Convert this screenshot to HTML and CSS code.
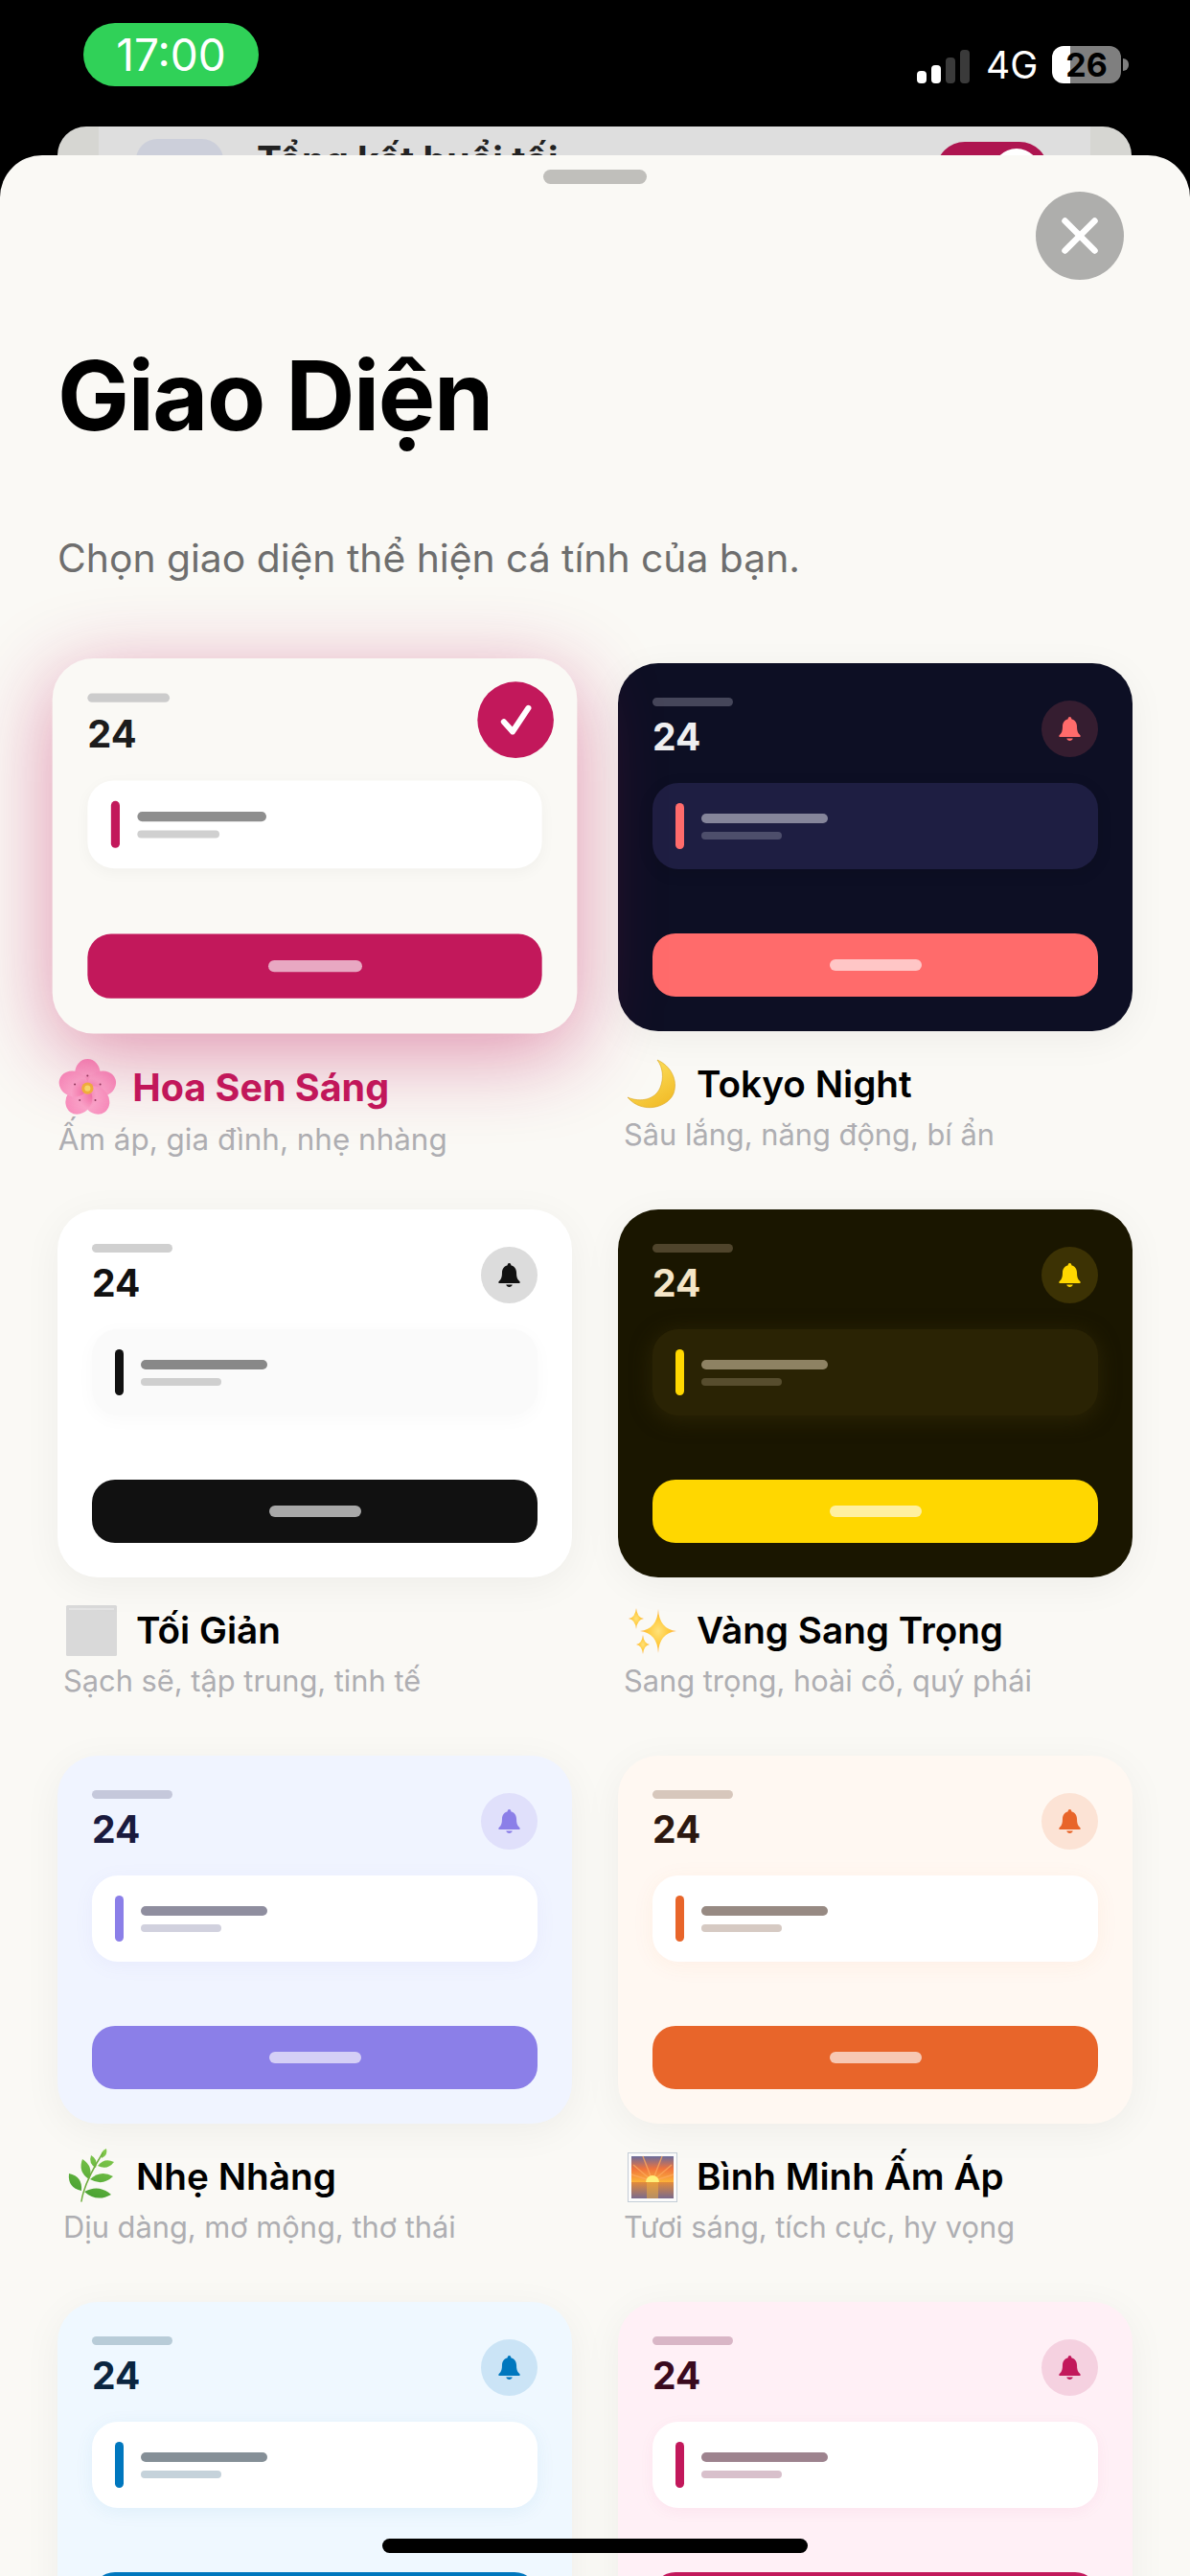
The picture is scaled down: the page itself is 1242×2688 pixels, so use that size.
FILE: index.html
```html
<!DOCTYPE html>
<html lang="vi">
<head>
<meta charset="utf-8">
<title>Giao Diện</title>
<link rel="stylesheet" href="styles.css">
</head>
<body>
<svg class="sprite" width="0" height="0" aria-hidden="true">
  <symbol id="bell" viewBox="3 2 18 20">
    <path d="M12 2c-.8 0-1.4.6-1.4 1.3v.5C7.8 4.5 6 6.9 6 9.8c0 3.5-.7 5.3-1.6 6.4-.6.7-1.4 1.1-1.4 1.8 0 .5.4.8 1 .8h16c.6 0 1-.3 1-.8 0-.7-.8-1.1-1.4-1.8-.9-1.1-1.6-2.9-1.6-6.4 0-2.9-1.8-5.3-4.6-6v-.5C13.4 2.6 12.8 2 12 2zM9.4 20c.2 1.2 1.4 2 2.6 2s2.4-.8 2.6-2H9.4z"/>
  </symbol>
</svg>
<div class="phone">
  <header class="status">
    <div class="time">17:00</div>
    <div class="status-right">
      <div class="signal">
        <i class="bar b1"></i><i class="bar b2"></i><i class="bar b3"></i><i class="bar b4"></i>
      </div>
      <span class="net">4G</span>
      <div class="battery"><span class="batt-text">26</span></div>
      <i class="batt-nub"></i>
    </div>
  </header>

  <div class="peek">
    <div class="peek-inner">
      <div class="peek-tile"></div>
      <div class="peek-title">Tổng kết buổi tối</div>
      <div class="peek-toggle"><i class="peek-knob"></i></div>
    </div>
  </div>

  <main class="sheet">
    <div class="grabber"></div>
    <div class="close-row">
      <button class="close" aria-label="Đóng">
        <svg width="38" height="38" viewBox="0 0 38 38"><path d="M3.5 3.5l31 31M34.5 3.5l-31 31" fill="none" stroke="#fff" stroke-width="6.5" stroke-linecap="round"/></svg>
      </button>
    </div>
    <h1 class="title">Giao Diện</h1>
    <p class="subtitle">Chọn giao diện thể hiện cá tính của bạn.</p>

    <div class="grid">

      <article class="item selected t-lotus">
        <div class="card">
          <div class="head"><div class="head-left"><i class="line"></i><b class="num">24</b></div><span class="bell-wrap"><svg class="bell"><use href="#bell"/></svg></span></div>
          <div class="list"><i class="accent"></i><div class="texts"><i class="l1"></i><i class="l2"></i></div></div>
          <div class="btn"><i class="pill"></i></div>
          <span class="check"><svg width="78" height="78" viewBox="0 0 78 78"><path d="M27 41l9 10 16-24" fill="none" stroke="#fff" stroke-width="6" stroke-linecap="round" stroke-linejoin="round"/></svg></span>
        </div>
        <div class="name-row">
          <svg class="emoji" viewBox="0 0 60 60">
            <defs><radialGradient id="petal" gradientUnits="userSpaceOnUse" cx="30" cy="31" r="29"><stop offset="0" stop-color="#F472A8"/><stop offset=".5" stop-color="#FBA6CB"/><stop offset="1" stop-color="#F98FBE"/></radialGradient></defs>
            <g fill="url(#petal)">
              <ellipse cx="30" cy="16" rx="13" ry="15"/>
              <ellipse cx="44.3" cy="26.4" rx="15" ry="13" transform="rotate(-18 44.3 26.4)"/>
              <ellipse cx="38.8" cy="43.1" rx="13" ry="15" transform="rotate(-36 38.8 43.1)"/>
              <ellipse cx="21.2" cy="43.1" rx="13" ry="15" transform="rotate(36 21.2 43.1)"/>
              <ellipse cx="15.7" cy="26.4" rx="15" ry="13" transform="rotate(18 15.7 26.4)"/>
            </g>
            <g fill="#8E3B5E"><circle cx="30" cy="18" r="1"/><circle cx="43" cy="27" r="1"/><circle cx="38" cy="43" r="1"/><circle cx="22" cy="43" r="1"/><circle cx="17" cy="27" r="1"/></g>
            <circle cx="30" cy="31" r="6" fill="#F3B73A"/><circle cx="30" cy="31" r="3" fill="#FBE16A"/>
          </svg>
          <h2 class="name">Hoa Sen Sáng</h2>
        </div>
        <p class="desc">Ấm áp, gia đình, nhẹ nhàng</p>
      </article>

      <article class="item t-tokyo">
        <div class="card">
          <div class="head"><div class="head-left"><i class="line"></i><b class="num">24</b></div><span class="bell-wrap"><svg class="bell"><use href="#bell"/></svg></span></div>
          <div class="list"><i class="accent"></i><div class="texts"><i class="l1"></i><i class="l2"></i></div></div>
          <div class="btn"><i class="pill"></i></div>
        </div>
        <div class="name-row">
          <svg class="emoji" viewBox="0 0 60 60">
            <defs><linearGradient id="moon" x1="0" y1="0" x2=".6" y2="1"><stop offset="0" stop-color="#FFE766"/><stop offset="1" stop-color="#F2BE2C"/></linearGradient></defs>
            <path d="M35 5C49 11 57 26 52 40 46 55 19 62 4 44 18 50 33 46 38 34 42 24 41 13 35 5Z" fill="url(#moon)" stroke="#D9A520" stroke-width=".6"/>
          </svg>
          <h2 class="name">Tokyo Night</h2>
        </div>
        <p class="desc">Sâu lắng, năng động, bí ẩn</p>
      </article>

      <article class="item t-minimal">
        <div class="card">
          <div class="head"><div class="head-left"><i class="line"></i><b class="num">24</b></div><span class="bell-wrap"><svg class="bell"><use href="#bell"/></svg></span></div>
          <div class="list"><i class="accent"></i><div class="texts"><i class="l1"></i><i class="l2"></i></div></div>
          <div class="btn"><i class="pill"></i></div>
        </div>
        <div class="name-row">
          <svg class="emoji" viewBox="0 0 60 60">
            <rect x="3" y="4" width="53" height="53" rx="1.5" fill="#D9D9D9"/>
            <rect x="6" y="7" width="47" height="2" fill="#E4E4E4"/>
          </svg>
          <h2 class="name">Tối Giản</h2>
        </div>
        <p class="desc">Sạch sẽ, tập trung, tinh tế</p>
      </article>

      <article class="item t-gold">
        <div class="card">
          <div class="head"><div class="head-left"><i class="line"></i><b class="num">24</b></div><span class="bell-wrap"><svg class="bell"><use href="#bell"/></svg></span></div>
          <div class="list"><i class="accent"></i><div class="texts"><i class="l1"></i><i class="l2"></i></div></div>
          <div class="btn"><i class="pill"></i></div>
        </div>
        <div class="name-row">
          <svg class="emoji" viewBox="0 0 60 60">
            <defs><radialGradient id="spark"><stop offset="0" stop-color="#FFE27A"/><stop offset=".6" stop-color="#FFC93C"/><stop offset="1" stop-color="#FFAA44"/></radialGradient></defs>
            <g fill="url(#spark)">
              <path d="M36 8Q37 29 55 31 37 33 36 54 35 33 17 31 35 29 36 8Z"/>
              <path d="M13 7Q14 17 21 18 14 19 13 29 12 19 5 18 12 17 13 7Z"/>
              <path d="M20 35Q21 44 27 45 21 46 20 55 19 46 13 45 19 44 20 35Z"/>
            </g>
          </svg>
          <h2 class="name">Vàng Sang Trọng</h2>
        </div>
        <p class="desc">Sang trọng, hoài cổ, quý phái</p>
      </article>

      <article class="item t-soft">
        <div class="card">
          <div class="head"><div class="head-left"><i class="line"></i><b class="num">24</b></div><span class="bell-wrap"><svg class="bell"><use href="#bell"/></svg></span></div>
          <div class="list"><i class="accent"></i><div class="texts"><i class="l1"></i><i class="l2"></i></div></div>
          <div class="btn"><i class="pill"></i></div>
        </div>
        <div class="name-row">
          <svg class="emoji" viewBox="0 0 60 60">
            <defs><linearGradient id="herb" gradientUnits="userSpaceOnUse" x1="40" y1="0" x2="20" y2="58"><stop offset="0" stop-color="#86CC4E"/><stop offset="1" stop-color="#3F9A2E"/></linearGradient></defs>
            <g fill="url(#herb)">
              <path d="M19 45Q20.600 30.100 6 27 4.400 41.900 19 45Z"/>
              <path d="M22 46Q35 57.500 50 49 37 37.500 22 46Z"/>
              <path d="M27 33Q32 19.600 20 12 15 25.400 27 33Z"/>
              <path d="M28 33Q41 40.500 52 30 39 22.500 28 33Z"/>
              <path d="M34 21Q37 12.300 29 8 26 16.700 34 21Z"/>
              <path d="M36 19Q46 24 53 15 43 10 36 19Z"/>
              <path d="M40 11Q47 8 45 1 38 4 40 11Z"/>
            </g>
            <path d="M19 56C21 42 29 25 41 6" fill="none" stroke="#6FAE3E" stroke-width="1.5" stroke-linecap="round"/>
          </svg>
          <h2 class="name">Nhẹ Nhàng</h2>
        </div>
        <p class="desc">Dịu dàng, mơ mộng, thơ thái</p>
      </article>

      <article class="item t-dawn">
        <div class="card">
          <div class="head"><div class="head-left"><i class="line"></i><b class="num">24</b></div><span class="bell-wrap"><svg class="bell"><use href="#bell"/></svg></span></div>
          <div class="list"><i class="accent"></i><div class="texts"><i class="l1"></i><i class="l2"></i></div></div>
          <div class="btn"><i class="pill"></i></div>
        </div>
        <div class="name-row">
          <svg class="emoji" viewBox="0 0 60 60">
            <defs>
              <linearGradient id="sky" x1="0" y1="0" x2="0" y2="1"><stop offset="0" stop-color="#6A6C9C"/><stop offset=".3" stop-color="#F0743C"/><stop offset=".65" stop-color="#FDBB3A"/></linearGradient>
              <linearGradient id="sea" x1="0" y1="0" x2="0" y2="1"><stop offset="0" stop-color="#E28A3A"/><stop offset="1" stop-color="#7A6A8C"/></linearGradient>
            </defs>
            <rect x="4.500" y="5.500" width="51" height="51" fill="#FBFBFB" stroke="#C4CDD6"/>
            <rect x="8" y="9" width="44" height="44" fill="url(#sky)"/>
            <g stroke="#FDA85C" stroke-width="1.4" opacity=".8"><path d="M30 35L10 18M30 35L20 9M30 35L40 9M30 35L50 18M30 35L8 28M30 35L52 28"/></g>
            <path d="M23 36a7 7 0 0 1 14 0z" fill="#FFF07A"/>
            <rect x="8" y="36" width="44" height="17" fill="url(#sea)"/>
            <rect x="24" y="36" width="12" height="17" fill="#F2B23C" opacity=".5"/>
          </svg>
          <h2 class="name">Bình Minh Ấm Áp</h2>
        </div>
        <p class="desc">Tươi sáng, tích cực, hy vọng</p>
      </article>

      <article class="item t-sky">
        <div class="card">
          <div class="head"><div class="head-left"><i class="line"></i><b class="num">24</b></div><span class="bell-wrap"><svg class="bell"><use href="#bell"/></svg></span></div>
          <div class="list"><i class="accent"></i><div class="texts"><i class="l1"></i><i class="l2"></i></div></div>
          <div class="btn"><i class="pill"></i></div>
        </div>
      </article>

      <article class="item t-rose">
        <div class="card">
          <div class="head"><div class="head-left"><i class="line"></i><b class="num">24</b></div><span class="bell-wrap"><svg class="bell"><use href="#bell"/></svg></span></div>
          <div class="list"><i class="accent"></i><div class="texts"><i class="l1"></i><i class="l2"></i></div></div>
          <div class="btn"><i class="pill"></i></div>
        </div>
      </article>

    </div>
  </main>

  <div class="home"></div>
</div>
</body>
</html>
```

FILE: styles.css
```css
* { box-sizing: border-box; }
html, body { margin: 0; padding: 0; background: #000; }
body { font-family: Inter, "Noto Sans", sans-serif; }
i { display: block; }
.sprite { position: absolute; }

.phone { position: relative; width: 1242px; height: 2688px; overflow: hidden; background: #000; display: flex; flex-direction: column; }

/* status bar */
.status { height: 132px; flex: none; display: flex; align-items: flex-start; justify-content: space-between; padding: 24px 64px 0 87px; }
.time { width: 183px; height: 66px; border-radius: 33px; background: #30D158; color: #fff; font-size: 46px; line-height: 66px; text-align: center; font-weight: 400; }
.status-right { display: flex; align-items: center; margin-top: 24px; height: 39px; }
.signal { display: flex; align-items: flex-end; gap: 5px; height: 35px; margin-top: 4px; }
.bar { width: 10px; border-radius: 4px; }
.b1 { height: 13px; background: #fff; }
.b2 { height: 19px; background: #fff; }
.b3 { height: 27px; background: #3A3A3A; }
.b4 { height: 35px; background: #3A3A3A; }
.net { color: #fff; font-size: 39px; line-height: 39px; margin-left: 17px; width: 69px; font-weight: 400; }
.battery { width: 72px; height: 39px; border-radius: 12px; background: linear-gradient(90deg, #fff 19px, #7F7F7F 19px); color: #000; text-align: center; font-size: 34px; line-height: 39px; font-weight: 700; }
.batt-nub { width: 6px; height: 13px; margin-left: 2px; background: #7F7F7F; border-radius: 0 6px 6px 0; }

/* screen peeking behind the sheet */
.peek { height: 30px; flex: none; margin: 0 61px 0 60px; overflow: hidden; background: #D6D6D2; border-radius: 36px 36px 0 0; padding: 0 43px; }
.peek-inner { height: 80px; background: #DEDEDE; display: flex; align-items: flex-start; padding: 13px 44px 0 39px; }
.peek-tile { width: 91px; height: 80px; background: #CCCFDA; border-radius: 22px; flex: none; }
.peek-title { margin-left: 35px; color: #222; font-size: 39px; line-height: 44px; font-weight: 700; flex: 1; }
.peek-toggle { width: 117px; height: 60px; margin-top: 3px; border-radius: 30px; background: #AE1550; padding: 7px 8px; display: flex; justify-content: flex-end; }
.peek-knob { width: 50px; height: 50px; border-radius: 50%; background: #fff; }

/* sheet */
.sheet { flex: 1; min-height: 0; background: #FAF9F5; border-radius: 44px 44px 0 0; padding: 15px 60px 0; }
.grabber { width: 108px; height: 15px; border-radius: 8px; background: #C0BFBB; margin: 0 auto; }
.close-row { display: flex; justify-content: flex-end; margin: 8px 9px 0 0; }
.close { width: 92px; height: 92px; border: 0; padding: 0; border-radius: 50%; background: #AEAEAC; display: flex; align-items: center; justify-content: center; }
.title { margin: 66px 0 0; font-size: 100px; line-height: 110px; font-weight: 700; color: #000; letter-spacing: -1.4px; }
.subtitle { margin: 89px 0 0; font-size: 40.8px; line-height: 50px; color: #6E6E6E; font-weight: 400; }

.grid { display: grid; grid-template-columns: 537px 537px; column-gap: 48px; row-gap: 58px; margin-top: 85px; }
.item { height: 512px; }
.selected { transform: scale(1.02); position: relative; z-index: 1; }

.card { position: relative; height: 384px; border-radius: 42px; padding: 36px; display: flex; flex-direction: column; background: var(--bg); box-shadow: 0 8px 40px rgba(0,0,0,.05); }
.selected .card { box-shadow: 0 20px 84px rgba(194,24,91,.46); }

.head { display: flex; justify-content: space-between; align-items: center; height: 65px; }
.head-left { display: flex; flex-direction: column; align-self: flex-start; }
.line { width: 84px; height: 9px; border-radius: 5px; background: var(--line); }
.num { font-size: 39px; line-height: 47px; margin-top: 8px; font-weight: 700; color: var(--num); }
.bell-wrap { width: 59px; height: 59px; border-radius: 50%; background: var(--bellbg); display: flex; align-items: center; justify-content: center; }
.bell { width: 23px; height: 25px; fill: var(--accent); }

.list { height: 90px; margin-top: 24px; border-radius: 27px; background: var(--list); box-shadow: var(--listshadow); display: flex; align-items: center; padding-left: 24px; gap: 18px; }
.accent { width: 9px; height: 48px; border-radius: 5px; background: var(--accent); }
.texts { display: flex; flex-direction: column; gap: 9px; }
.l1 { width: 132px; height: 10px; border-radius: 5px; background: var(--l1); }
.l2 { width: 84px; height: 8px; border-radius: 4px; background: var(--l2); }

.btn { height: 66px; margin-top: auto; border-radius: 24px; background: var(--accent); display: flex; align-items: center; justify-content: center; }
.pill { width: 96px; height: 12px; border-radius: 6px; background: var(--pill); }

.check { position: absolute; top: 24px; right: 24px; width: 78px; height: 78px; border-radius: 50%; background: #C2185B; }

.name-row { display: flex; align-items: center; height: 60px; margin-top: 25px; padding-left: 6px; gap: 16px; }
.emoji { width: 60px; height: 60px; flex: none; }
.name { margin: 0; font-size: 38.7px; line-height: 60px; font-weight: 560; color: #000; }
.selected .name { color: #C2185B; font-weight: 700; }
.desc { margin: 3px 0 0; padding-left: 6px; font-size: 30.8px; line-height: 40px; color: #AEAEB2; }

/* themes */
.t-lotus { --bg:#FAF9F5; --line:#CCCCCC; --num:#1C1C1C; --list:#fff; --accent:#C2185B; --l1:#8E8E8E; --l2:#D0D0D0; --bellbg:#F3D6E2; --pill:#E8A8C2; --listshadow:0 4px 16px rgba(0,0,0,.04); }
.t-tokyo { --bg:#0D0F24; --line:#45465A; --num:#EFEFF1; --list:#1E1E42; --accent:#FF6B6B; --l1:#85859A; --l2:#4D4E6B; --bellbg:#351D30; --pill:#FFC6C6; --listshadow:0 4px 16px rgba(0,0,0,.12); }
.t-minimal { --bg:#FFFFFF; --line:#D0D0D0; --num:#111111; --list:#FAFAFA; --accent:#111111; --l1:#888888; --l2:#CFCFCF; --bellbg:#DCDCDC; --pill:#A8A8A8; --listshadow:0 4px 18px 2px #FAFAFA; }
.t-gold { --bg:#1A1600; --line:#4F442B; --num:#F5E6C8; --list:#2A2304; --accent:#FFD700; --l1:#8E8263; --l2:#574D2E; --bellbg:#3C3204; --pill:#FFF0A0; --listshadow:0 4px 20px 2px #2A2304; }
.t-soft { --bg:#F0F4FF; --line:#C5C8DB; --num:#1A1A3E; --list:#fff; --accent:#8B7FE8; --l1:#8F8E9F; --l2:#D1D1DE; --bellbg:#E0E0FB; --pill:#D5CFF6; --listshadow:0 4px 20px rgba(139,127,232,.07); }
.t-dawn { --bg:#FFF8F2; --line:#D7C7BC; --num:#2C1810; --list:#fff; --accent:#E8652A; --l1:#978A83; --l2:#D6CAC3; --bellbg:#FCE3D5; --pill:#F7C8B3; --listshadow:0 4px 24px rgba(232,101,42,.06); }
.t-sky { --bg:#EFF8FF; --line:#B8CCD8; --num:#0A2540; --list:#fff; --accent:#0077BE; --l1:#858F97; --l2:#C5D2DA; --bellbg:#CBE4F6; --pill:#B3D6EC; --listshadow:0 4px 20px rgba(0,119,190,.07); }
.t-rose { --bg:#FFF0F6; --line:#D9B6C6; --num:#3A0A1E; --list:#fff; --accent:#C2185B; --l1:#9D838E; --l2:#D8C0CB; --bellbg:#F5D1E0; --pill:#E8A8C2; --listshadow:0 4px 16px rgba(194,24,91,.05); }

.home { position: absolute; left: 399px; top: 2649px; width: 444px; height: 15px; border-radius: 8px; background: #000; }
```
